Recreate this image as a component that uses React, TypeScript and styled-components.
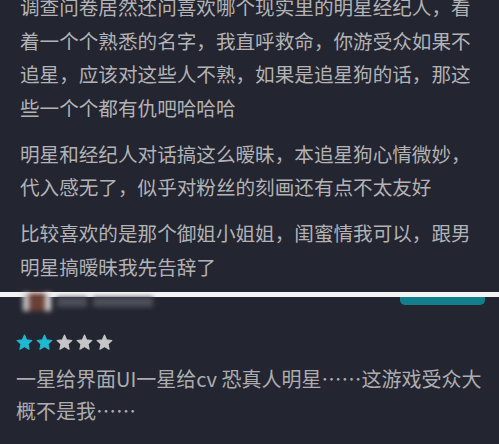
import React from "react";
import styled, { createGlobalStyle } from "styled-components";

// ============== Style Component =============
const GlobalStyle = createGlobalStyle`
  html, body {
    margin: 0;
    padding: 0;
    background: #232530;
  }
  body {
    font-family: "Noto Sans CJK SC", "Noto Sans", sans-serif;
  }
`;

const Page = styled.div`
  width: 499px;
  height: 444px;
  overflow: hidden;
  background: #232530;
`;

const Comments = styled.div`
  margin-top: -10px;
  padding: 0 19px 0 20px;
`;

const Paragraph = styled.p`
  margin: 0 0 12.5px;
  font-size: 19.6px;
  line-height: 33.5px;
  color: #b3b3b6;
  &:last-child {
    margin-bottom: 0;
  }
`;

const Divider = styled.div`
  height: 5px;
  margin-top: 9px;
  background: #f4f4f4;
`;

const ReviewHeader = styled.div`
  display: flex;
  justify-content: space-between;
  align-items: flex-start;
  height: 37px;
  padding: 0 14px 0 15px;
`;

const BlurredUser = styled.div`
  display: flex;
  align-items: center;
  gap: 6px;
  height: 16px;
  margin-top: -3px;
  filter: blur(2.5px);
`;

const Avatar = styled.div`
  width: 28px;
  height: 18px;
  margin-left: 8px;
  background: linear-gradient(90deg, #c9c9c9 0 20%, #6a4136 20% 80%, #d6d6d6 80%);
`;

const NameBlur = styled.div<{ $w: number }>`
  width: ${(p) => p.$w}px;
  height: 10px;
  background: #4d4f58;
`;

const TealButton = styled.div`
  width: 85px;
  height: 8px;
  background: #12808c;
  border-radius: 0 0 5px 5px;
`;

const Stars = styled.div`
  display: flex;
  gap: 3px;
  padding-left: 16px;
  height: 18px;
`;

const ReviewText = styled.p`
  margin: 11px 0 0;
  padding: 0 13px 0 16px;
  font-size: 20px;
  line-height: 32px;
  color: #adadb0;
`;

// ========================================

const Star = ({ on }: { on: boolean }) => (
  <svg width="17" height="17" viewBox="0 0 24 24">
    <polygon
      points="12,1.5 15.1,8.3 22.5,9.1 17,14.1 18.5,21.5 12,17.8 5.5,21.5 7,14.1 1.5,9.1 8.9,8.3"
      fill={on ? "#1fb9d1" : "#c6c6c8"}
      strokeLinejoin="round"
      stroke={on ? "#1fb9d1" : "#c6c6c8"}
      strokeWidth="1.5"
    />
  </svg>
);

const paragraphs = [
  "调查问卷居然还问喜欢哪个现实里的明星经纪人，看着一个个熟悉的名字，我直呼救命，你游受众如果不追星，应该对这些人不熟，如果是追星狗的话，那这些一个个都有仇吧哈哈哈",
  "明星和经纪人对话搞这么暧昧，本追星狗心情微妙，代入感无了，似乎对粉丝的刻画还有点不太友好",
  "比较喜欢的是那个御姐小姐姐，闺蜜情我可以，跟男明星搞暧昧我先告辞了",
];

export default function App() {
  return (
    <Page>
      <GlobalStyle />
      <Comments>
        {paragraphs.map((t) => (
          <Paragraph key={t}>{t}</Paragraph>
        ))}
      </Comments>
      <Divider />
      <ReviewHeader>
        <BlurredUser>
          <Avatar />
          <NameBlur $w={30} />
          <NameBlur $w={60} />
        </BlurredUser>
        <TealButton />
      </ReviewHeader>
      <Stars>
        {[1, 2, 3, 4, 5].map((i) => (
          <Star key={i} on={i <= 2} />
        ))}
      </Stars>
      <ReviewText>一星给界面UI一星给cv 恐真人明星……这游戏受众大概不是我……</ReviewText>
    </Page>
  );
}
